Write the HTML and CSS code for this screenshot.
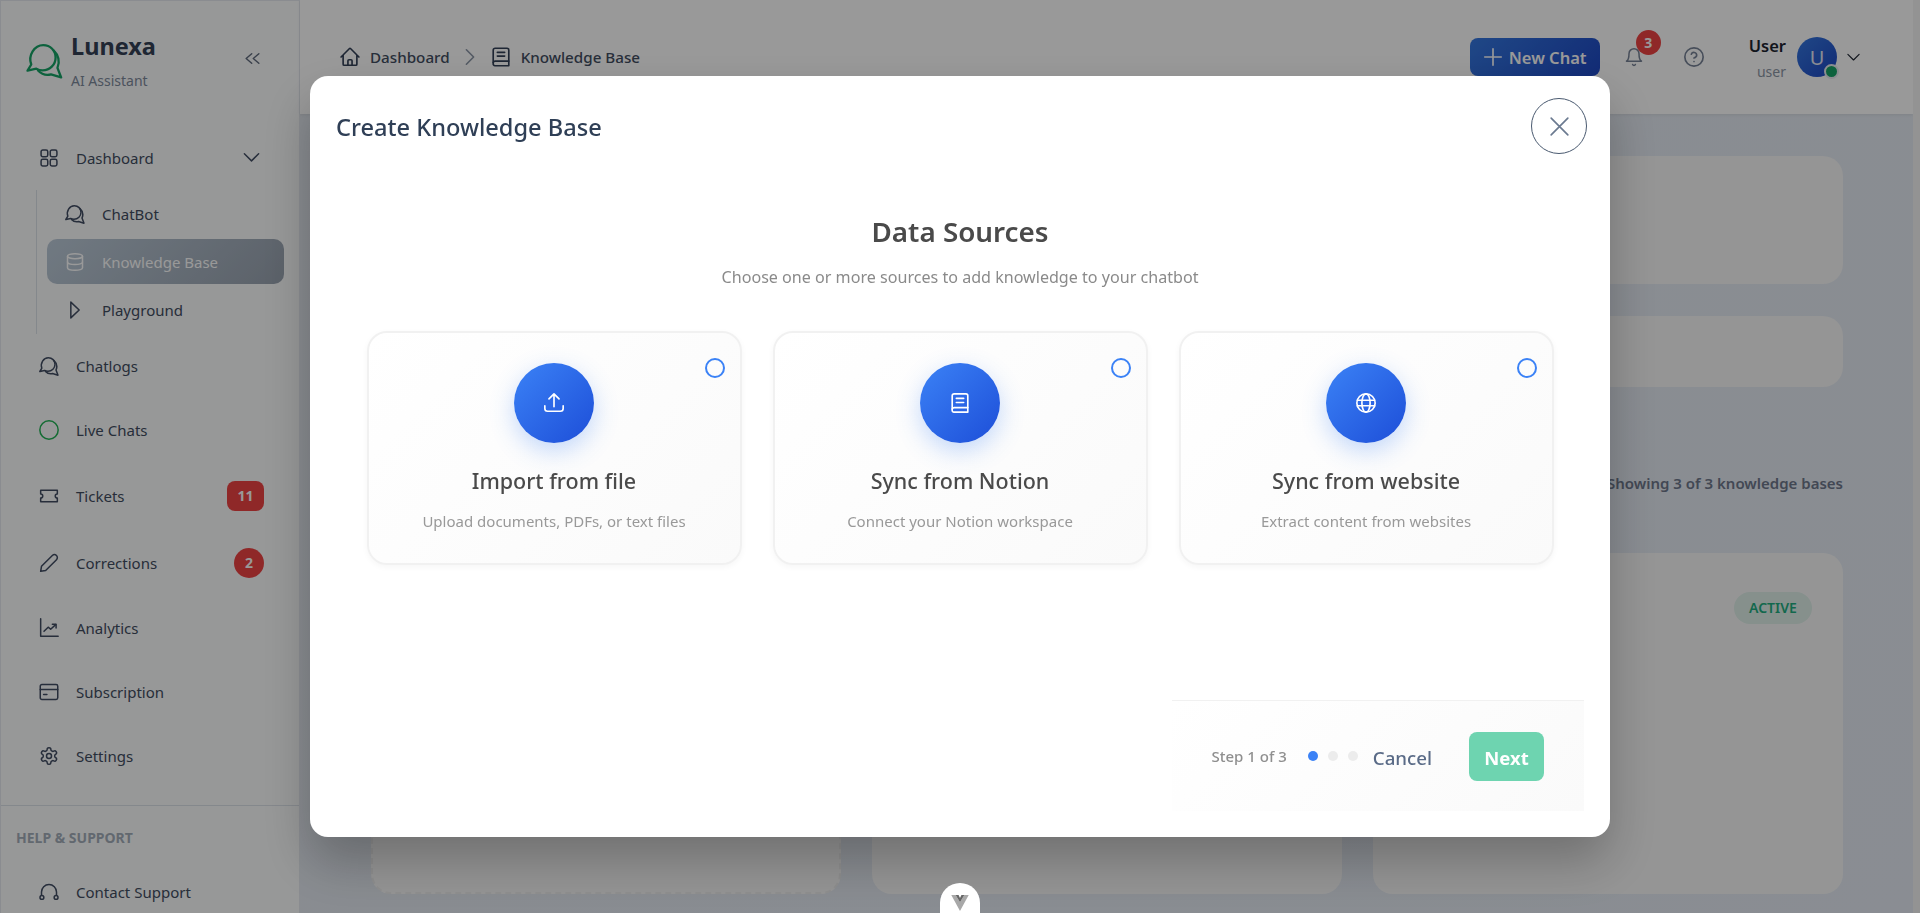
FILE: index.html
```html
<!DOCTYPE html>
<html>
<head>
    <title>Lunexa - Knowledge Base</title>
    <link rel="stylesheet" href="styles.css">
</head>
<body>
    <svg class="defs" width="0" height="0">
        <symbol id="chat" viewBox="0 0 24 24">
            <path d="M3.4 14.6C1.2 8.6 5.4 2 11.2 2c4.6 0 8 3.6 8 8 0 4.8-3.8 8.400-8.400 8.400-1.500 0-2.900-.4-4.100-1.100L1 18.600z"/>
            <path d="M18 5.600c3 2.800 4.200 7.200 2.400 11.200L22.800 23l-6.600-2c-3.200.8-6.200-.2-8.400-2.500"/>
        </symbol>
    </svg>

    <div class="app">
        <aside class="sidebar">
            <div class="brand">
                <svg class="brand_logo"><use href="#chat"/></svg>
                <div class="brand_text">
                    <div class="brand_name">Lunexa</div>
                    <div class="brand_sub">AI Assistant</div>
                </div>
                <svg class="collapse" viewBox="0 0 24 24"><path d="M11 6l-7 6 7 6M20 6l-7 6 7 6"/></svg>
            </div>

            <nav class="nav">
                <div class="nav_item">
                    <svg class="icon" viewBox="0 0 24 24"><rect x="2.500" y="2.500" width="8" height="8" rx="2"/><rect x="13.500" y="2.500" width="8" height="8" rx="2"/><rect x="2.500" y="13.500" width="8" height="8" rx="2"/><rect x="13.500" y="13.500" width="8" height="8" rx="2"/></svg>
                    <span>Dashboard</span>
                    <svg class="nav_arrow" viewBox="0 0 24 24"><path d="M3 6l9 9 9-9"/></svg>
                </div>
                <div class="subnav">
                    <div class="sub_item">
                        <svg class="icon"><use href="#chat"/></svg>
                        <span>ChatBot</span>
                    </div>
                    <div class="sub_item sub_active">
                        <svg class="icon" viewBox="0 0 24 24"><ellipse cx="12" cy="5" rx="9" ry="3"/><path d="M3 5v14c0 1.700 4 3 9 3s9-1.300 9-3V5"/><path d="M3 12c0 1.700 4 3 9 3s9-1.300 9-3"/></svg>
                        <span>Knowledge Base</span>
                    </div>
                    <div class="sub_item">
                        <svg class="icon" viewBox="0 0 24 24"><path d="M7 2.500l10 9.500-10 9.500z"/></svg>
                        <span>Playground</span>
                    </div>
                </div>
                <div class="nav_item">
                    <svg class="icon"><use href="#chat"/></svg>
                    <span>Chatlogs</span>
                </div>
                <div class="nav_item">
                    <svg class="icon icon_live" viewBox="0 0 24 24"><circle cx="12" cy="12" r="11"/></svg>
                    <span>Live Chats</span>
                </div>
                <div class="nav_item nav_tall">
                    <svg class="icon" viewBox="0 0 24 24"><path d="M2 5h20v4.500a2.500 2.500 0 0 0 0 5V19H2v-4.500a2.500 2.500 0 0 0 0-5z"/></svg>
                    <span>Tickets</span>
                    <span class="count count_wide">11</span>
                </div>
                <div class="nav_item nav_tall">
                    <svg class="icon" viewBox="0 0 24 24"><path d="M2 22l1-6L16 3a3.500 3.500 0 0 1 5 5L8 21z"/></svg>
                    <span>Corrections</span>
                    <span class="count">2</span>
                </div>
                <div class="nav_item">
                    <svg class="icon" viewBox="0 0 24 24"><path d="M2 1v21h21"/><path d="M6 16l5-5 3 2.500 6-5.500"/><path d="M16 7.500h4.500V12"/></svg>
                    <span>Analytics</span>
                </div>
                <div class="nav_item">
                    <svg class="icon" viewBox="0 0 24 24"><rect x="1.500" y="3" width="21" height="18" rx="2"/><path d="M1.500 9h21M5.500 15h4"/></svg>
                    <span>Subscription</span>
                </div>
                <div class="nav_item">
                    <svg class="icon" viewBox="0 0 24 24"><path d="M12.220 2h-.440a2 2 0 0 0-2 2v.180a2 2 0 0 1-1 1.730l-.430.250a2 2 0 0 1-2 0l-.150-.080a2 2 0 0 0-2.730.730l-.220.380a2 2 0 0 0 .730 2.730l.150.100a2 2 0 0 1 1 1.720v.510a2 2 0 0 1-1 1.740l-.150.090a2 2 0 0 0-.730 2.730l.220.380a2 2 0 0 0 2.730.730l.150-.080a2 2 0 0 1 2 0l.430.250a2 2 0 0 1 1 1.730V20a2 2 0 0 0 2 2h.440a2 2 0 0 0 2-2v-.180a2 2 0 0 1 1-1.730l.430-.250a2 2 0 0 1 2 0l.150.080a2 2 0 0 0 2.730-.730l.220-.390a2 2 0 0 0-.730-2.730l-.150-.080a2 2 0 0 1-1-1.740v-.500a2 2 0 0 1 1-1.740l.150-.090a2 2 0 0 0 .730-2.730l-.220-.380a2 2 0 0 0-2.730-.730l-.150.080a2 2 0 0 1-2 0l-.430-.250a2 2 0 0 1-1-1.730V4a2 2 0 0 0-2-2z"/><circle cx="12" cy="12" r="3"/></svg>
                    <span>Settings</span>
                </div>
            </nav>

            <div class="help">
                <div class="help_title">HELP &amp; SUPPORT</div>
                <div class="nav_item">
                    <svg class="icon" viewBox="0 0 24 24"><path d="M3 16v-4a9 9 0 0 1 18 0v4"/><circle cx="3.500" cy="18.500" r="2.300"/><circle cx="20.500" cy="18.500" r="2.300"/></svg>
                    <span>Contact Support</span>
                </div>
            </div>
        </aside>

        <div class="main">
            <header class="topbar">
                <div class="crumbs">
                    <svg class="crumb_icon" viewBox="0 0 24 24"><path d="M2.250 12l8.954-8.955c.44-.439 1.152-.439 1.591 0L21.750 12M4.500 9.750v10.125c0 .621.504 1.125 1.125 1.125H9.750v-4.875c0-.621.504-1.125 1.125-1.125h2.250c.621 0 1.125.504 1.125 1.125V21h4.125c.621 0 1.125-.504 1.125-1.125V9.750M8.250 21h8.250"/></svg>
                    <span>Dashboard</span>
                    <svg class="crumb_sep" viewBox="0 0 12 20"><path d="M2 2l8 8-8 8"/></svg>
                    <svg class="crumb_icon" viewBox="0 0 24 24"><path d="M3.500 19V4.500a2 2 0 0 1 2-2h13a2 2 0 0 1 2 2v17h-15a2 2 0 0 1-2-2.500z"/><path d="M3.500 18c.3-1 1-1.500 2-1.500h15M8 7h8M8 11h8"/></svg>
                    <span>Knowledge Base</span>
                </div>
                <div class="top_actions">
                    <button class="new_chat"><svg viewBox="0 0 24 24"><path d="M12 3v18M3 12h18"/></svg>New Chat</button>
                    <div class="bell">
                        <svg viewBox="0 0 24 24"><path d="M6 8a6 6 0 0 1 12 0c0 7 3 9 3 9H3s3-2 3-9"/><path d="M10.300 21a1.900 1.900 0 0 0 3.400 0"/></svg>
                        <span class="bell_badge">3</span>
                    </div>
                    <svg class="help_icon" viewBox="0 0 24 24"><circle cx="12" cy="12" r="10"/><path d="M9.090 9a3 3 0 0 1 5.830 1c0 2-3 3-3 3M12 17h.010"/></svg>
                    <div class="user">
                        <div class="user_text">
                            <div class="user_name">User</div>
                            <div class="user_role">user</div>
                        </div>
                        <div class="avatar">U<span class="avatar_dot"></span></div>
                        <svg class="user_arrow" viewBox="0 0 24 24"><path d="M3 7l9 9 9-9"/></svg>
                    </div>
                </div>
            </header>

            <main class="content">
                <div class="panel panel_stats"></div>
                <div class="panel panel_filter"></div>
                <div class="showing">Showing 3 of 3 knowledge bases</div>
                <div class="kb_grid">
                    <div class="kb_card kb_new"></div>
                    <div class="kb_card"></div>
                    <div class="kb_card"><span class="kb_status">ACTIVE</span></div>
                </div>
            </main>
        </div>
        <div class="scrollbar"></div>
    </div>

    <div class="overlay">
        <div class="modal">
            <div class="modal_head">
                <h2 class="modal_title">Create Knowledge Base</h2>
                <button class="modal_close"><svg viewBox="0 0 24 24"><path d="M4 4l16 16M20 4L4 20"/></svg></button>
            </div>

            <h3 class="sources_title">Data Sources</h3>
            <p class="sources_sub">Choose one or more sources to add knowledge to your chatbot</p>

            <div class="sources">
                <div class="source">
                    <span class="radio"></span>
                    <div class="source_icon">
                        <svg viewBox="0 0 24 24"><path d="M2 15v3a3 3 0 0 0 3 3h14a3 3 0 0 0 3-3v-3M12 16V2M6.500 7.500L12 2l5.500 5.500"/></svg>
                    </div>
                    <div class="source_name">Import from file</div>
                    <div class="source_text">Upload documents, PDFs, or text files</div>
                </div>
                <div class="source">
                    <span class="radio"></span>
                    <div class="source_icon">
                        <svg viewBox="0 0 24 24"><path d="M3.500 19.500V4a2 2 0 0 1 2-2h13a2 2 0 0 1 2 2v18h-15a2 2 0 0 1-2-2.500z"/><path d="M3.500 18.500c.3-1 1-1.500 2-1.500h15M8 7h8M8 11.500h8"/></svg>
                    </div>
                    <div class="source_name">Sync from Notion</div>
                    <div class="source_text">Connect your Notion workspace</div>
                </div>
                <div class="source">
                    <span class="radio"></span>
                    <div class="source_icon">
                        <svg viewBox="0 0 24 24"><circle cx="12" cy="12" r="10"/><ellipse cx="12" cy="12" rx="4.500" ry="10"/><path d="M2.500 9h19M2.500 15h19"/></svg>
                    </div>
                    <div class="source_name">Sync from website</div>
                    <div class="source_text">Extract content from websites</div>
                </div>
            </div>

            <div class="modal_foot">
                <span class="step">Step 1 of 3</span>
                <div class="dots">
                    <span class="dot dot_on"></span>
                    <span class="dot"></span>
                    <span class="dot"></span>
                </div>
                <button class="cancel">Cancel</button>
                <button class="next">Next</button>
            </div>
        </div>
    </div>

    <div class="devtools">
        <svg viewBox="0 0 24 22"><path class="vue_outer" d="M0 0h6l6 10 6-10h6L12 22z"/><path class="vue_inner" d="M6 0h4l2 4 2-4h4l-6 10z"/></svg>
    </div>
</body>
</html>
```

FILE: styles.css
```css
* {
  box-sizing: border-box;
}

html, body {
  height: 100%;
}

body {
  margin: 0;
  overflow: hidden;
  font-family: "Noto Sans", "Open Sans", sans-serif;
  color: #4b5a70;
  background-color: #ffffff;
}

svg {
  fill: none;
  stroke: currentColor;
  stroke-width: 1.800;
  stroke-linecap: round;
  stroke-linejoin: round;
}

.defs {
  position: absolute;
}

.app {
  display: flex;
  height: 100vh;
}

/* sidebar */
.sidebar {
  width: 300px;
  flex-shrink: 0;
  overflow: hidden;
  background-color: #fcfdfe;
  border: 1px solid #e6eaf0;
  border-bottom: 0;
}

.brand {
  display: flex;
  align-items: flex-start;
  height: 125px;
  padding: 28px 0 0 25px;
}

.brand_logo {
  width: 37px;
  height: 37px;
  margin-top: 13px;
  stroke-width: 1.500;
  color: #17a366;
}

.brand_text {
  margin-left: 8px;
  width: 84px;
}

.brand_name {
  font-size: 23.500px;
  font-weight: 700;
  line-height: 34px;
  color: #354156;
}

.brand_sub {
  margin-top: 8px;
  font-size: 14px;
  line-height: 20px;
  color: #7e8a9c;
}

.collapse {
  width: 19px;
  height: 19px;
  margin: 20px 0 0 88px;
  color: #5f6a7c;
}

.nav_item {
  display: flex;
  align-items: center;
  height: 64px;
  padding-left: 38px;
  font-size: 15px;
  color: #424d61;
}

.nav_tall {
  height: 67px;
}

.icon {
  width: 20px;
  height: 20px;
  margin-right: 17px;
  flex-shrink: 0;
  color: #414d63;
}

.icon_live {
  color: #22b455;
}

.nav_arrow {
  width: 19px;
  height: 19px;
  margin-left: 88px;
  color: #414d63;
}

.subnav {
  margin-left: 35px;
  padding-left: 10px;
  border-left: 1px solid #dde3ea;
}

.sub_item {
  display: flex;
  align-items: center;
  width: 237px;
  height: 48px;
  padding-left: 18px;
  font-size: 15px;
  color: #424d61;
  border-radius: 10px;
}

.sub_active {
  height: 45px;
  margin: 1px 0 2px;
  background: linear-gradient(135deg, #bccbd9, #98a2af);
  color: #ffffff;
}

.sub_active .icon {
  color: #ffffff;
}

.count {
  display: flex;
  align-items: center;
  justify-content: center;
  width: 30px;
  height: 30px;
  margin-left: auto;
  margin-right: 35px;
  border-radius: 50%;
  background-color: #ef4444;
  color: #ffffff;
  font-size: 14px;
  font-weight: 700;
}

.count_wide {
  width: 37px;
  border-radius: 8px;
}

.help {
  margin-top: 17px;
  border-top: 1px solid #dde3ea;
}

.help_title {
  padding: 21px 0 0 15px;
  font-size: 14px;
  font-weight: 700;
  line-height: 22px;
  color: #a3adba;
}

.help .nav_item {
  height: 64px;
  margin-top: 11px;
}

/* top bar */
.main {
  flex: 1;
  min-width: 0;
  background: linear-gradient(135deg, #e4e9f0, #e6ecf5);
}

.topbar {
  display: flex;
  align-items: center;
  justify-content: space-between;
  height: 114px;
  padding: 0 52px 0 39px;
  background-color: #ffffff;
  box-shadow: 0 1px 3px rgba(0, 0, 0, 0.08);
}

.crumbs {
  display: flex;
  align-items: center;
  font-size: 15.200px;
  font-weight: 500;
  color: #424d61;
}

.crumb_icon {
  width: 22px;
  height: 22px;
  margin-right: 9px;
  color: #334057;
}

.crumb_sep {
  width: 12px;
  height: 18px;
  margin: 0 14px;
  color: #8b96a6;
}

.top_actions {
  display: flex;
  align-items: center;
}

.new_chat {
  display: flex;
  align-items: center;
  width: 130px;
  height: 38px;
  margin-right: 24px;
  padding: 0 0 0 12px;
  border: 0;
  border-radius: 8px;
  background: linear-gradient(135deg, #3578e0, #1e48c4);
  color: #ffffff;
  font-family: inherit;
  font-size: 16.500px;
  font-weight: 600;
}

.new_chat svg {
  width: 22px;
  height: 22px;
  margin-right: 5px;
}

.bell {
  position: relative;
  width: 20px;
  height: 22px;
  color: #778296;
}

.bell svg {
  width: 20px;
  height: 22px;
}

.bell_badge {
  position: absolute;
  left: 12px;
  top: -16px;
  display: flex;
  align-items: center;
  justify-content: center;
  width: 25px;
  height: 25px;
  border-radius: 50%;
  background-color: #ef4444;
  color: #ffffff;
  font-size: 14px;
  font-weight: 700;
}

.help_icon {
  width: 22px;
  height: 22px;
  margin-left: 39px;
  color: #778296;
}

.user {
  display: flex;
  align-items: center;
  margin-left: 44px;
}

.user_text {
  text-align: right;
  padding-top: 2px;
}

.user_name {
  font-size: 16.500px;
  font-weight: 600;
  line-height: 24px;
  color: #1c2430;
}

.user_role {
  margin-top: 4px;
  font-size: 14px;
  line-height: 20px;
  color: #8c96a5;
}

.avatar {
  position: relative;
  display: flex;
  align-items: center;
  justify-content: center;
  width: 40px;
  height: 40px;
  margin-left: 11px;
  border-radius: 50%;
  background: linear-gradient(135deg, #3578e0, #1e48c4);
  color: #e5e9f5;
  font-size: 20px;
}

.avatar_dot {
  position: absolute;
  right: -2px;
  bottom: -2px;
  width: 15px;
  height: 15px;
  border: 2px solid #e8ecf0;
  border-radius: 50%;
  background-color: #17a366;
}

.user_arrow {
  width: 15px;
  height: 15px;
  margin-left: 9px;
  color: #1c2430;
}

/* page behind the dialog */
.content {
  padding: 42px 70px 0 71px;
}

.panel {
  border-radius: 20px;
  background-color: #f8f8f8;
}

.panel_stats {
  height: 128px;
}

.panel_filter {
  height: 71px;
  margin-top: 32px;
}

.showing {
  margin-top: 85px;
  text-align: right;
  font-size: 15px;
  font-weight: 600;
  line-height: 22px;
  color: #6f788c;
}

.kb_grid {
  display: grid;
  grid-template-columns: repeat(3, 1fr);
  gap: 31px;
  margin-top: 59px;
}

.kb_card {
  position: relative;
  height: 341px;
  border-radius: 20px;
  background-color: #f9f9f9;
}

.kb_new {
  border: 2px dashed #eeeeee;
}

.kb_status {
  position: absolute;
  top: 39px;
  right: 31px;
  width: 78px;
  height: 32px;
  border-radius: 16px;
  background-color: #dff0ea;
  color: #1fae80;
  font-size: 14px;
  font-weight: 600;
  line-height: 32px;
  text-align: center;
}

.scrollbar {
  width: 7px;
  flex-shrink: 0;
  background-color: #f6f6f6;
}

/* dialog */
.overlay {
  position: fixed;
  inset: 0;
  display: flex;
  align-items: center;
  justify-content: center;
  background-color: rgba(0, 0, 0, 0.4);
  backdrop-filter: blur(0.5px);
}

.modal {
  display: flex;
  flex-direction: column;
  width: 1300px;
  height: 761px;
  padding: 22px 26px 26px;
  border-radius: 18px;
  background-color: #ffffff;
  box-shadow: 0 25px 50px rgba(0, 0, 0, 0.25);
}

.modal_head {
  display: flex;
  align-items: center;
  justify-content: space-between;
  margin-right: -3px;
}

.modal_title {
  margin: 2px 0 0;
  font-size: 23.600px;
  font-weight: 500;
  color: #2f3f56;
}

.modal_close {
  display: flex;
  align-items: center;
  justify-content: center;
  width: 56px;
  height: 56px;
  padding: 0;
  border: 1px solid #4a5a70;
  border-radius: 50%;
  background-color: #ffffff;
  color: #6b7a90;
}

.modal_close svg {
  width: 25px;
  height: 25px;
  stroke-width: 1.600;
}

.sources_title {
  margin: 58px 0 0;
  font-size: 27.800px;
  font-weight: 600;
  line-height: 38px;
  text-align: center;
  color: #4a4a4a;
}

.sources_sub {
  margin: 16px 0 0;
  font-size: 16.100px;
  line-height: 22px;
  text-align: center;
  color: #8a8a8a;
}

.sources {
  display: grid;
  grid-template-columns: repeat(3, 375px);
  gap: 31px;
  justify-content: center;
  margin-top: 43px;
}

.source {
  position: relative;
  height: 234px;
  padding-top: 30px;
  border: 2px solid #f1f1f1;
  border-radius: 20px;
  background: linear-gradient(135deg, #ffffff, #fafafa);
  box-shadow: 0 2px 6px rgba(0, 0, 0, 0.04);
  text-align: center;
}

.radio {
  position: absolute;
  top: 25px;
  right: 15px;
  width: 20px;
  height: 20px;
  border: 2px solid #3b82f6;
  border-radius: 50%;
}

.source_icon {
  display: flex;
  align-items: center;
  justify-content: center;
  width: 80px;
  height: 80px;
  margin: 0 auto;
  border-radius: 50%;
  background: linear-gradient(135deg, #3b82f6, #1d4ed8);
  box-shadow: 0 8px 25px rgba(59, 130, 246, 0.3);
  color: #ffffff;
}

.source_icon svg {
  width: 22px;
  height: 22px;
}

.source_name {
  margin-top: 23px;
  font-size: 21.500px;
  font-weight: 500;
  line-height: 30px;
  color: #4a4a4a;
}

.source_text {
  margin-top: 15px;
  font-size: 15px;
  line-height: 20px;
  color: #999999;
}

.modal_foot {
  display: flex;
  align-items: center;
  justify-content: flex-end;
  align-self: flex-end;
  width: 412px;
  height: 111px;
  margin-top: auto;
  padding-right: 40px;
  border-top: 1px solid #f1f1f1;
  background: linear-gradient(135deg, #ffffff, #fafafa);
}

.step {
  font-size: 15px;
  font-weight: 500;
  color: #8f8f8f;
}

.dots {
  display: flex;
  gap: 10px;
  margin: 0 15px 0 21px;
}

.dot {
  width: 10px;
  height: 10px;
  border-radius: 50%;
  background-color: #ececec;
}

.dot_on {
  background-color: #3b82f6;
}

.cancel {
  margin-right: 37px;
  padding: 2px 0 0;
  border: 0;
  background: none;
  color: #5a6b87;
  font-family: inherit;
  font-size: 18.700px;
  font-weight: 500;
}

.next {
  width: 75px;
  height: 49px;
  padding: 2px 0 0;
  border: 0;
  border-radius: 8px;
  background-color: #6ed4b0;
  color: #ffffff;
  font-family: inherit;
  font-size: 18.500px;
  font-weight: 700;
}

/* little tab stuck to the bottom of the window */
.devtools {
  position: fixed;
  left: 940px;
  bottom: 0;
  display: flex;
  justify-content: center;
  width: 40px;
  height: 30px;
  padding-top: 12px;
  border-radius: 20px 20px 0 0;
  background-color: #ffffff;
}

.devtools svg {
  width: 18px;
  height: 16px;
  stroke: none;
}

.vue_outer {
  fill: #a8a8a8;
}

.vue_inner {
  fill: #666666;
}
```
